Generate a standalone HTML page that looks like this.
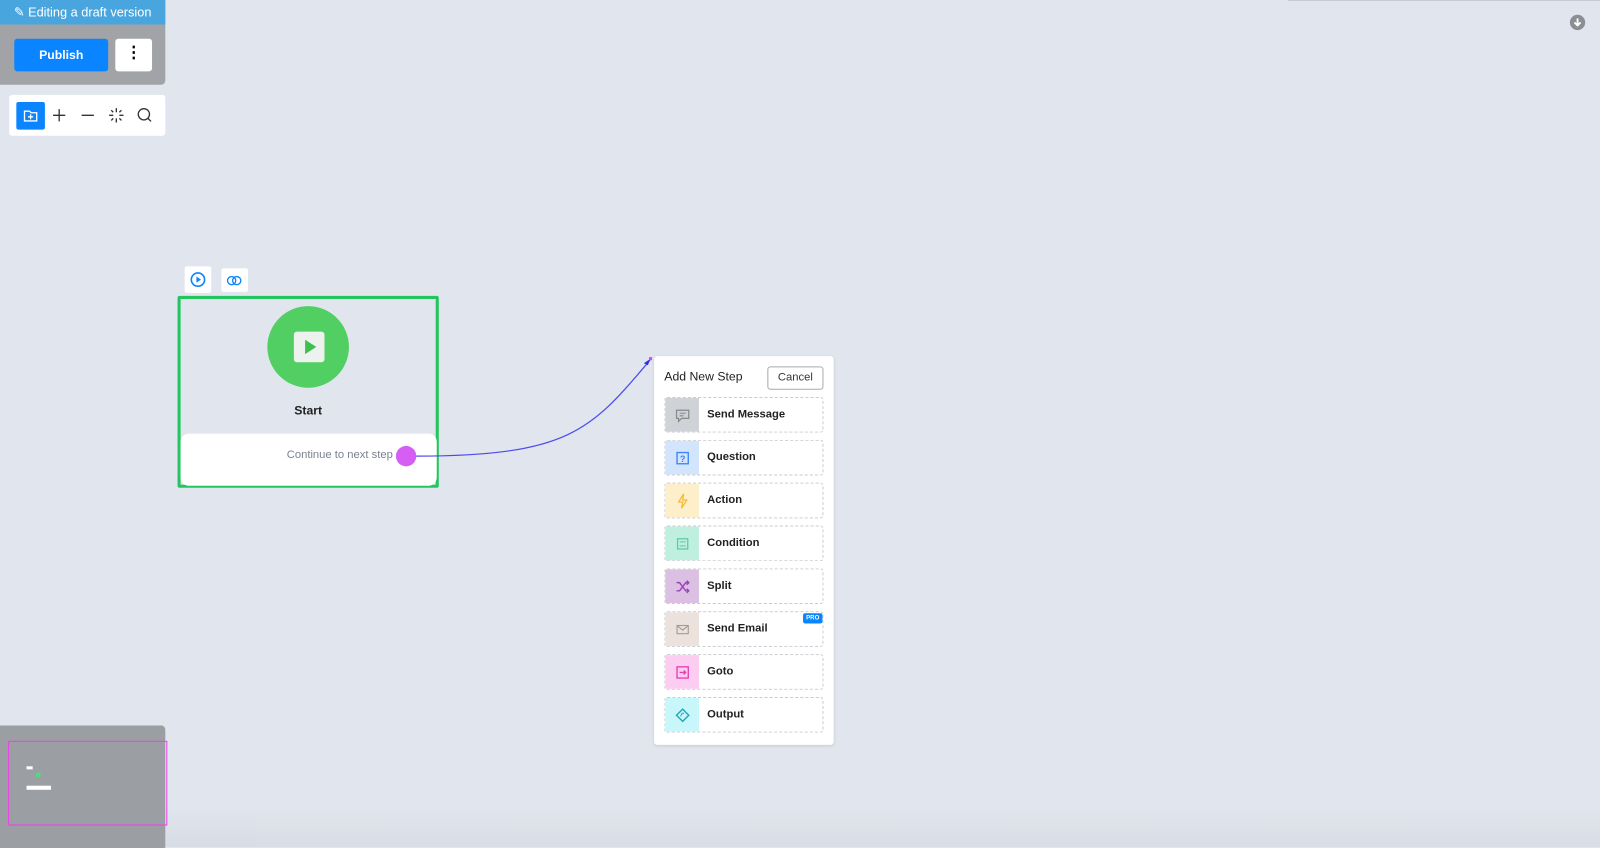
<!DOCTYPE html>
<html><head><meta charset="utf-8"><style>
*{box-sizing:border-box;margin:0;padding:0}
body{width:1600px;height:846px;background:#e1e6ee;font-family:"Liberation Sans",sans-serif;position:relative;overflow:hidden}
#w{position:absolute;left:0;top:0;width:1568px;height:830px;transform:scale(1.0204);transform-origin:0 0}
.abs{position:absolute}
.row{position:absolute;left:651px;width:156px;height:35px;border:1px dashed #c8cbd0;border-radius:3px;background:#fff}
.row .ic{position:absolute;left:0;top:0;width:33px;height:33px;display:flex;align-items:center;justify-content:center}
.row .t{position:absolute;left:41px;top:10px;font-size:11px;font-weight:bold;color:#222}
</style></head><body><div id="w">
<div class="abs" style="left:0;top:0;width:162px;height:83px;background:#a1a3a6;border-radius:0 0 4px 0"></div>
<div class="abs" style="left:0;top:0;width:162px;height:24px;background:#48a5de;color:#fff;font-size:12.5px;line-height:24px;text-align:center">&#9998; Editing a draft version</div>
<div class="abs" style="left:14px;top:38px;width:92px;height:32px;background:#0a84ff;border-radius:3px;color:#fff;font-size:12px;font-weight:bold;text-align:center;line-height:32px">Publish</div>
<div class="abs" style="left:113px;top:38px;width:36px;height:32px;background:#fff;border-radius:3px;text-align:center;line-height:30px;font-weight:bold;font-size:16px">&#8942;</div>
<div class="abs" style="left:9px;top:93px;width:153px;height:40px;background:#fff;border-radius:3px"></div>
<div class="abs" style="left:16px;top:100px;width:28px;height:27px;background:#0a84ff;border-radius:2px"></div>
<svg class="abs" style="left:16px;top:100px" width="28" height="27"><path d="M8 9h5l1.5 1.5H20v8H8z" fill="none" stroke="#fff" stroke-width="1.3"/><path d="M14 12v5M11.5 14.5h5" stroke="#fff" stroke-width="1.3"/></svg>
<svg class="abs" style="left:48px;top:103px" width="110" height="20"><path d="M10 4v12M4 10h12" stroke="#333" stroke-width="1.3"/><path d="M32 10h12" stroke="#333" stroke-width="1.3"/><g stroke="#333" stroke-width="1.3"><path d="M66 3v4M66 13v4M59 10h4M69 10h4M61 5l2 2M69 13l2 2M71 5l-2 2M61 15l2-2"/></g><circle cx="93" cy="9" r="5.5" fill="none" stroke="#333" stroke-width="1.3"/><path d="M97 13l3 3" stroke="#333" stroke-width="1.3"/></svg>
<div class="abs" style="left:1262px;top:0;width:306px;height:1px;background:#c8ccd2"></div>
<svg class="abs" style="left:1538px;top:14px" width="16" height="16"><circle cx="8" cy="8" r="7.5" fill="#8b8e92"/><path d="M8 4v7M5 8l3 3 3-3" stroke="#fff" stroke-width="1.8" fill="none"/></svg>
<div class="abs" style="left:181px;top:261px;width:26px;height:26px;background:#fff;border-radius:2px"></div>
<svg class="abs" style="left:186px;top:266px" width="16" height="16"><circle cx="8" cy="8" r="6.5" fill="none" stroke="#0a84ff" stroke-width="1.6"/><path d="M6.5 5v6l4.5-3z" fill="#0a84ff"/></svg>
<div class="abs" style="left:217px;top:263px;width:26px;height:23px;background:#fff;border-radius:2px"></div>
<svg class="abs" style="left:221px;top:269px" width="18" height="12"><circle cx="6" cy="6" r="4" fill="none" stroke="#0a84ff" stroke-width="1.3"/><circle cx="11" cy="6" r="4" fill="none" stroke="#0a84ff" stroke-width="1.3"/></svg>
<div class="abs" style="left:174px;top:290px;width:256px;height:188px;border:3px solid #22c55e;border-radius:2px"></div>
<div class="abs" style="left:262px;top:300px;width:80px;height:80px;border-radius:50%;background:#52cf62"></div>
<div class="abs" style="left:288px;top:325px;width:30px;height:30px;background:#eef2ee;border-radius:3px"></div>
<svg class="abs" style="left:288px;top:325px" width="30" height="30"><path d="M11 8v14l11-7z" fill="#3fbf50"/></svg>
<div class="abs" style="left:262px;top:395px;width:80px;text-align:center;font-size:12px;font-weight:bold;color:#222">Start</div>
<div class="abs" style="left:177px;top:425px;width:251px;height:51px;background:#fff;border-radius:8px"></div>
<div class="abs" style="left:281px;top:440px;font-size:11px;color:#7a8190">Continue to next step</div>
<div class="abs" style="left:388px;top:437px;width:20px;height:20px;border-radius:50%;background:#d55ef5"></div>
<svg class="abs" style="left:0;top:0" width="1568" height="830"><path d="M408 447 C 560 447, 580 420, 637 353" fill="none" stroke="#4a4af0" stroke-width="1.2"/><path d="M637 352l-6 4 4 2z" fill="#3030e0"/><rect x="636" y="350" width="3" height="3" fill="#e040fb"/></svg>
<div class="abs" style="left:641px;top:349px;width:176px;height:381px;background:#fff;border-radius:3px;box-shadow:0 1px 3px rgba(0,0,0,.12)"></div>
<div class="abs" style="left:651px;top:362px;font-size:12px;color:#222">Add New Step</div>
<div class="abs" style="left:752px;top:359px;width:55px;height:23px;border:1px solid #aaa;border-radius:3px;font-size:11px;text-align:center;line-height:21px;color:#333">Cancel</div>
<div class="row" style="top:389px"><div class="ic" style="background:#cfd2d7"><svg width="16" height="16"><path d="M2 3h12v8H7l-3 3v-3H2z" fill="none" stroke="#888" stroke-width="1.2"/><path d="M5 6h6M5 8.5h4" stroke="#888"/></svg></div><div class="t">Send Message</div></div>
<div class="row" style="top:431px"><div class="ic" style="background:#d3e5fc"><svg width="16" height="16"><rect x="2.5" y="2.5" width="11" height="11" fill="none" stroke="#3b82f6" stroke-width="1.3"/><text x="8" y="12" font-size="9" font-weight="bold" text-anchor="middle" fill="#3b82f6" font-family="Liberation Sans">?</text></svg></div><div class="t">Question</div></div>
<div class="row" style="top:473px"><div class="ic" style="background:#fdefc9"><svg width="16" height="16"><path d="M9 1L4 9h4l-1 6 5-8H8z" fill="none" stroke="#f5b93a" stroke-width="1.2"/></svg></div><div class="t">Action</div></div>
<div class="row" style="top:515px"><div class="ic" style="background:#bff0df"><svg width="16" height="16"><rect x="3" y="3" width="10" height="10" fill="none" stroke="#5cc8a8" stroke-width="1.2"/><path d="M5 6h6M5 10h6" stroke="#5cc8a8"/></svg></div><div class="t">Condition</div></div>
<div class="row" style="top:557px"><div class="ic" style="background:#dcc0e3"><svg width="16" height="16"><path d="M2 4h3l6 8h3M2 12h3l6-8h3M12 2l2 2-2 2M12 10l2 2-2 2" fill="none" stroke="#9b45b5" stroke-width="1.4"/></svg></div><div class="t">Split</div></div>
<div class="row" style="top:599px"><div class="ic" style="background:#ece2dd"><svg width="16" height="16"><rect x="2.5" y="4" width="11" height="8" fill="none" stroke="#a89890" stroke-width="1.1"/><path d="M2.5 4l5.5 4.5 5.5-4.5" fill="none" stroke="#a89890" stroke-width="1.1"/></svg></div><div class="t">Send Email</div><div class="abs" style="right:0;top:1px;background:#0a84ff;color:#fff;font-size:6px;font-weight:bold;padding:2px 3px;border-radius:2px">PRO</div></div>
<div class="row" style="top:641px"><div class="ic" style="background:#fccdf1"><svg width="16" height="16"><rect x="2.5" y="2.5" width="11" height="11" fill="none" stroke="#e040b0" stroke-width="1.3"/><path d="M5 8h6M9 6l2 2-2 2" fill="none" stroke="#e040b0" stroke-width="1.3"/></svg></div><div class="t">Goto</div></div>
<div class="row" style="top:683px"><div class="ic" style="background:#c7f6fb"><svg width="16" height="16"><path d="M8 2l6 6-6 6-6-6z" fill="none" stroke="#20a8b8" stroke-width="1.4"/><path d="M6 9l1.5-3h2" fill="none" stroke="#20a8b8"/></svg></div><div class="t">Output</div></div>
<div class="abs" style="left:0;top:711px;width:162px;height:120px;background:#9b9ea2;border-radius:0 4px 0 0"></div>
<div class="abs" style="left:8px;top:726px;width:156px;height:83px;border:1.5px solid #f03cf0"></div>
<div class="abs" style="left:26px;top:770px;width:24px;height:4px;background:#fff"></div>
<div class="abs" style="left:35px;top:757px;width:5px;height:5px;border-radius:50%;background:#4ade80"></div>
<div class="abs" style="left:26px;top:751px;width:6px;height:3px;background:#fff"></div>
<div class="abs" style="left:162px;top:790px;width:1406px;height:40px;background:linear-gradient(rgba(0,0,0,0),rgba(0,0,0,.04))"></div>
</div></body></html>
